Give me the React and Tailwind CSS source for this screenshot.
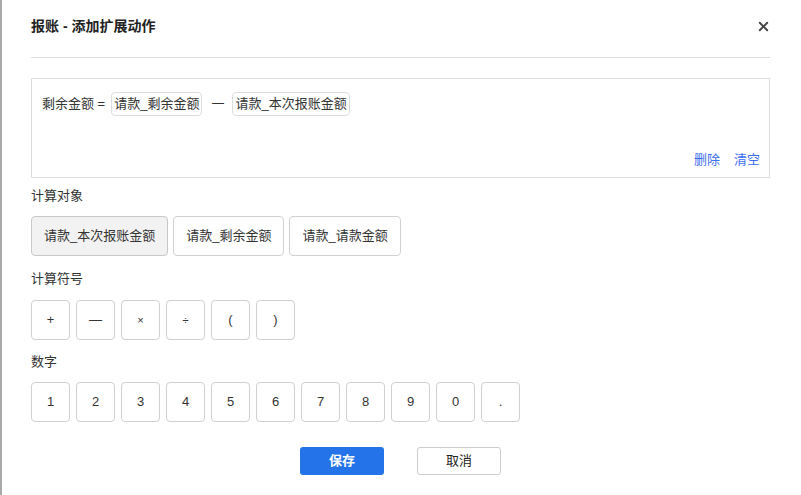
import { X } from "lucide-react";

const targets = ["请款_本次报账金额", "请款_剩余金额", "请款_请款金额"];
const operators = ["+", "—", "×", "÷", "(", ")"];
const digits = ["1", "2", "3", "4", "5", "6", "7", "8", "9", "0", "."];

export default function App() {
  return (
    <div
      className="w-[801px] h-[495px] bg-white border-l-2 border-[#a9a9a9] text-[13px] text-[#333]"
      style={{ fontFamily: '"Liberation Sans", "Noto Sans CJK SC", sans-serif' }}
    >
      <div className="ml-[29px] mr-[31px]">
        {/* Header */}
        <div className="h-[58px] pt-4 border-b border-[#dcdcdc] flex justify-between">
          <h1 className="text-[14px] leading-5 font-bold text-[#222]">报账 - 添加扩展动作</h1>
          <button className="h-5 w-5 flex items-center justify-center text-[#444] -mr-[3px]">
            <X size={15} strokeWidth={3} />
          </button>
        </div>

        {/* Formula */}
        <div className="mt-5 h-[100px] border border-[#dcdcdc] flex flex-col justify-between">
          <div className="pt-[13px] pl-[10px] flex items-center">
            <span className="leading-6">剩余金额 =</span>
            <span className="ml-[6px] px-[2px] h-6 leading-[22px] border border-[#dcdcdc] rounded-[4px]">请款_剩余金额</span>
            <span className="ml-[9px] mr-[8px] leading-6">一</span>
            <span className="px-[2px] h-6 leading-[22px] border border-[#dcdcdc] rounded-[4px]">请款_本次报账金额</span>
          </div>
          <div className="pb-[7px] pr-[9px] flex justify-end gap-[14px] leading-5 text-[#3c6cf0]">
            <button>删除</button>
            <button>清空</button>
          </div>
        </div>

        {/* Targets */}
        <div className="mt-2 leading-5">计算对象</div>
        <div className="mt-[10px] flex gap-[5px]">
          {targets.map((t, i) => (
            <button
              key={t}
              className={`h-10 px-[12px] border rounded-[4px] ${
                i === 0 ? "bg-[#f2f2f2] border-[#c8c8c8]" : "bg-white border-[#d0d0d0]"
              }`}
            >
              {t}
            </button>
          ))}
        </div>

        {/* Operators */}
        <div className="mt-[13px] leading-5">计算符号</div>
        <div className="mt-[11px] flex gap-[6px]">
          {operators.map((o) => (
            <button
              key={o}
              className={`w-[39px] h-10 border border-[#d0d0d0] rounded-[4px] flex items-center justify-center ${
                o === "×" || o === "÷" ? "text-[11px]" : "text-[13px]"
              }`}
            >
              {o}
            </button>
          ))}
        </div>

        {/* Digits */}
        <div className="mt-[12px] leading-5">数字</div>
        <div className="mt-[10px] flex gap-[6px]">
          {digits.map((d) => (
            <button
              key={d}
              className="w-[39px] h-10 border border-[#d0d0d0] rounded-[4px] flex items-center justify-center"
            >
              {d}
            </button>
          ))}
        </div>
      </div>

      {/* Footer */}
      <div className="mt-[25px] flex justify-center gap-[33px] -translate-x-px">
        <button className="w-[84px] h-[28px] rounded-[3px] bg-[#2473e8] text-white font-bold">保存</button>
        <button className="w-[84px] h-[28px] rounded-[3px] border border-[#cccccc] bg-white text-[#222]">取消</button>
      </div>
    </div>
  );
}
